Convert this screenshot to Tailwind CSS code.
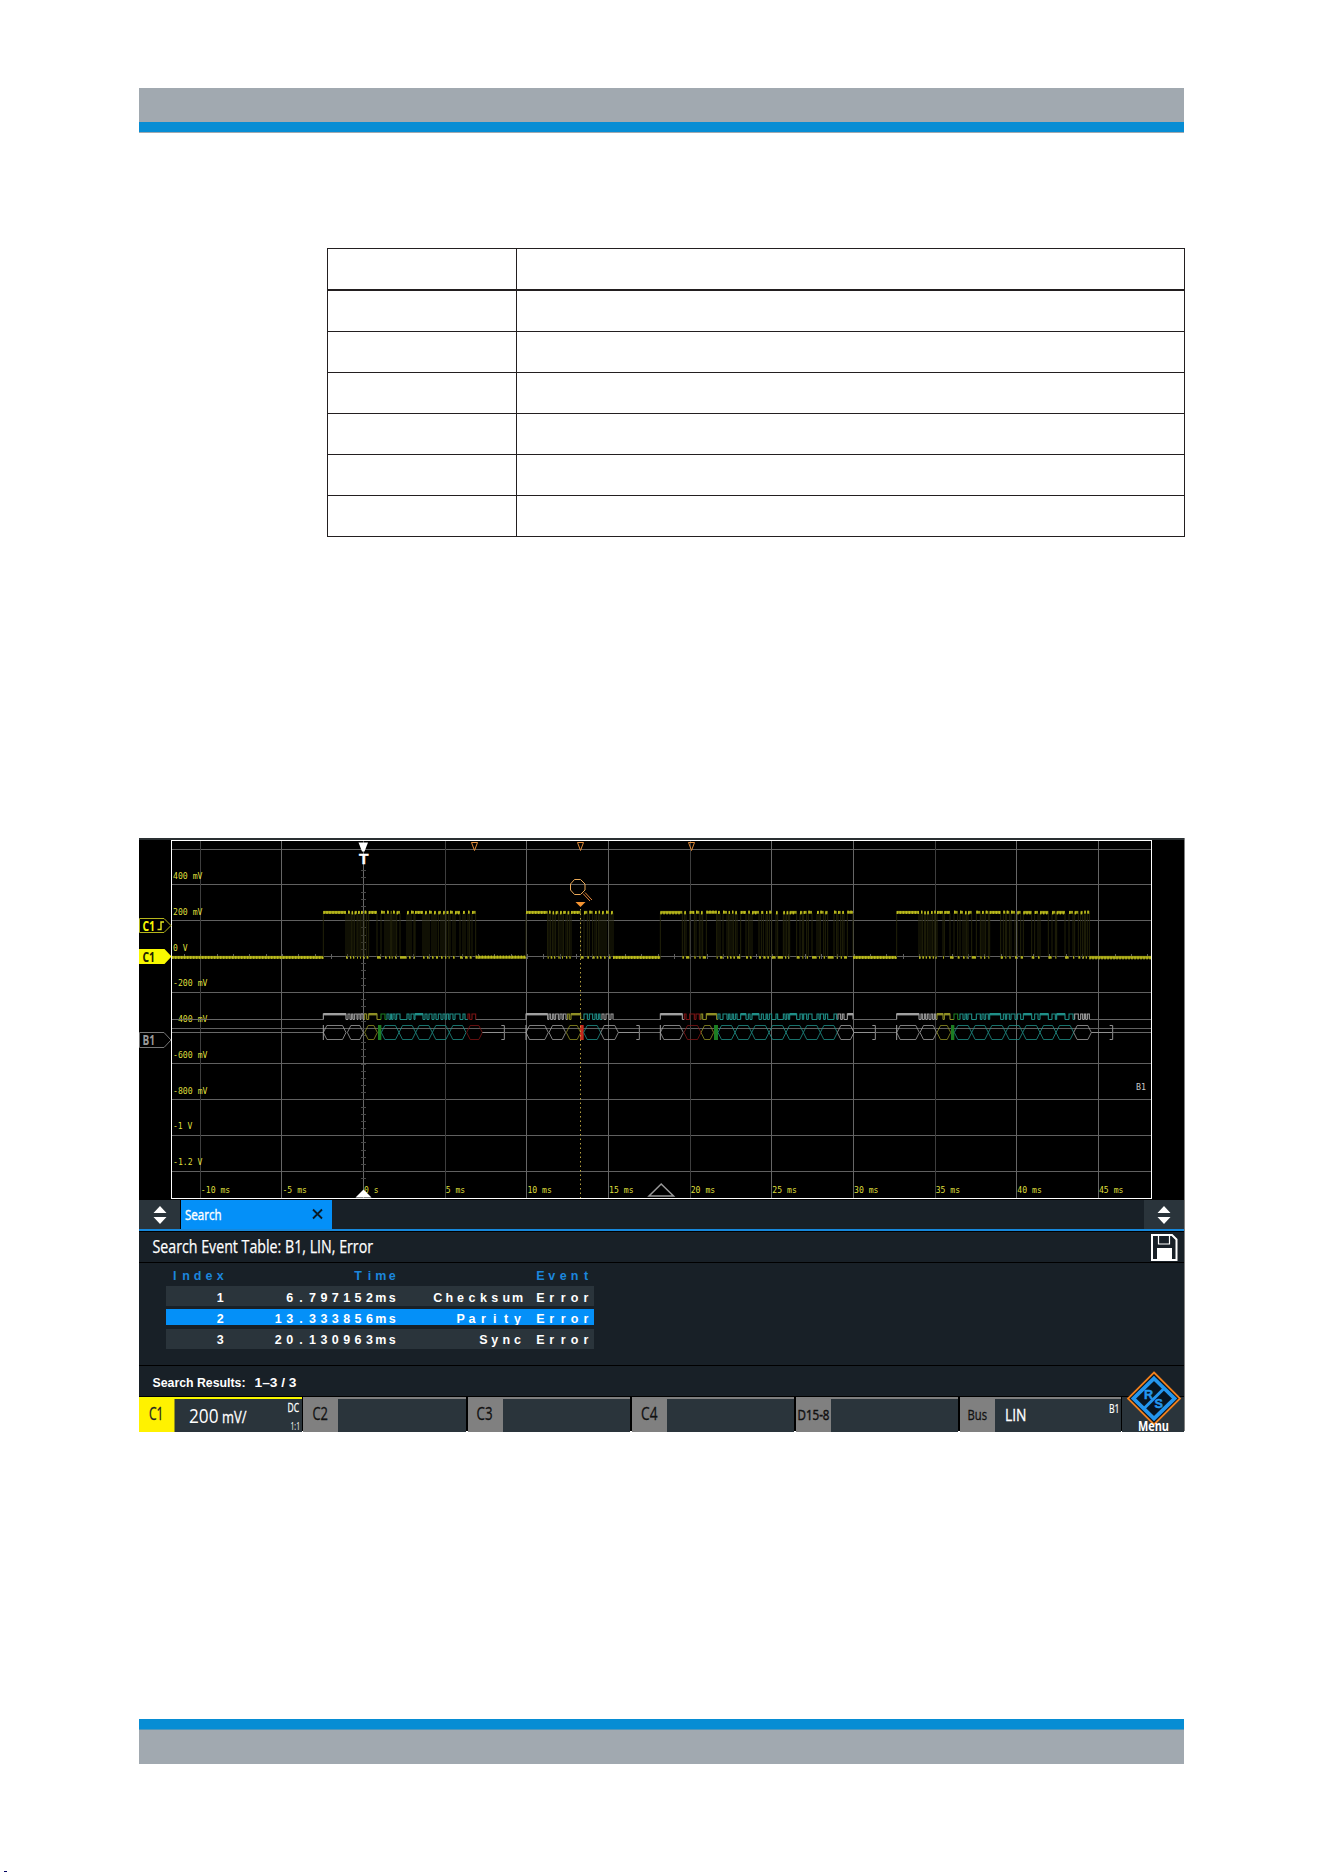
<!DOCTYPE html>
<html lang="en">

<head>
    <meta charset="UTF-8">
    <meta name="viewport" content="width=device-width, initial-scale=1.0">
    <title>LIN Search Results</title>
    <script src="https://cdn.jsdelivr.net/npm/@tailwindcss/browser@4"></script>
</head>

<body class="bg-white">
    <div class="relative w-[1324px] h-[1872px] overflow-hidden pl-[139px] pt-[88px] font-['Open_Sans',sans-serif]">
        <header class="w-[1045px] h-[45px] bg-[#a1a9b0] border-b border-[#a1a9b0] flex flex-col justify-end">
            <div class="h-[10px] bg-[#078dd4]"></div>
        </header>

        <!-- Empty description table -->
        <div class="mt-[115px] ml-[188px] w-[858px] h-[289px] border border-[#231f20] flex">
            <div class="w-[189px] border-r border-[#231f20] flex flex-col">
                <div class="h-[42px] border-b-2 border-[#231f20]"></div>
                <div class="h-[41px] border-b border-[#231f20]"></div>
                <div class="h-[41px] border-b border-[#231f20]"></div>
                <div class="h-[41px] border-b border-[#231f20]"></div>
                <div class="h-[41px] border-b border-[#231f20]"></div>
                <div class="h-[41px] border-b border-[#231f20]"></div>
            </div>
            <div class="flex-1 flex flex-col">
                <div class="h-[42px] border-b-2 border-[#231f20]"></div>
                <div class="h-[41px] border-b border-[#231f20]"></div>
                <div class="h-[41px] border-b border-[#231f20]"></div>
                <div class="h-[41px] border-b border-[#231f20]"></div>
                <div class="h-[41px] border-b border-[#231f20]"></div>
                <div class="h-[41px] border-b border-[#231f20]"></div>
            </div>
        </div>

        <!-- Oscilloscope screen -->
        <main class="mt-[301px] w-[1046px] h-[593px] bg-black border-r border-[#808080] flex flex-col">
            <svg id="plot" class="block w-[1045px] h-[361px] shrink-0" viewBox="139 838 1045 361">
                <rect x="139" y="838" width="1045" height="2" fill="#2a3033" />
                <g id="grid"></g>
                <g id="labels" font-family="'DejaVu Sans Mono', monospace" font-size="9.5" fill="#dede3c"></g>
                <g id="traces"></g>
                <rect x="171.5" y="840.5" width="980" height="358" fill="none" stroke="#fff" />
                <text x="1136" y="1090" font-family="'DejaVu Sans Mono', monospace" font-size="9" fill="#c8c8c8" textLength="10" lengthAdjust="spacingAndGlyphs">B1</text>

                <!-- trigger markers -->
                <path d="M358.5 842.500h9.500l-3.500 9h-2.500z" fill="#fff" />
                <text x="359" y="864" font-family="'Liberation Sans', sans-serif" font-size="14" font-weight="700" fill="#fff" stroke="#fff" stroke-width=".4" textLength="9.500" lengthAdjust="spacingAndGlyphs">T</text>
                <path d="M355.500 1197.500h16l-8-8z" fill="#fff" />
                <path d="M649 1196h24.500l-12.300-12z" fill="none" stroke="#999" stroke-width="1.500" />

                <!-- search hit markers -->
                <g fill="none" stroke="#e08a38">
                    <path d="M471.500 842.500h6l-3 8z" />
                    <path d="M577.500 842.500h6l-3 8z" />
                    <path d="M688.500 842.500h6l-3 8z" />
                    <path d="M574.500 879.500h6l4.500 4.500v6l-4.500 4.500h-6l-4-4.500v-6z" stroke="#e8a858" />
                    <path d="M583 893.500l7 7.500M585 892.500l7 7.500" stroke="#e8883a" />
                </g>
                <path d="M575.500 902h10l-5 5z" fill="#f59432" />
                <path d="M580.500 909V1198" stroke="#b5a040" stroke-dasharray="1.500 3" />

                <!-- channel tags -->
                <path d="M139.500 918.500h24.500l7 7-7 7h-24.500z" fill="#000" stroke="#b5b51c" />
                <path d="M139 949h25.500l7 7.500-7 7.500H139z" fill="#f8f800" />
                <path d="M139.500 1032.500h24.500l7 7.500-7 7.500h-24.500z" fill="#000" stroke="#777" />
                <g font-family="'Open Sans', sans-serif" font-size="13.500" font-weight="700">
                    <text x="142.500" y="930.500" fill="#f8f800" textLength="12.500" lengthAdjust="spacingAndGlyphs">C1</text>
                    <text x="142.500" y="961.500" fill="#222200" textLength="12.500" lengthAdjust="spacingAndGlyphs">C1</text>
                    <text x="142.500" y="1044.500" fill="#999" textLength="12.500" lengthAdjust="spacingAndGlyphs">B1</text>
                </g>
                <path d="M157.500 929.500h3.500v-7.500h3" fill="none" stroke="#e8e820" stroke-width="1.400" />
            </svg>

            <!-- Tab bar -->
            <div class="mt-px h-[31px] bg-[#182027] border-b-2 border-[#1688dc] flex shrink-0">
                <div class="w-[42px] bg-[#2a343b] border-r border-black flex items-center justify-center">
                    <svg class="w-[14px] h-[20px]" viewBox="0 0 14 20" fill="#fff">
                        <path d="M.5 8L7 1l6.500 7zM.500 12h13L7 19z" />
                    </svg>
                </div>
                <div class="w-[151px] bg-[#0490f8]">
                    <svg class="block w-[151px] h-[29px]" viewBox="181 1200 151 29">
                        <text x="185" y="1219.500" font-size="14" fill="#fff" stroke="#fff" stroke-width=".4" textLength="36.500" lengthAdjust="spacingAndGlyphs">Search</text>
                        <path d="M313 1209.500l9 9M322 1209.500l-9 9" stroke="#0a1a28" stroke-width="1.800" />
                    </svg>
                </div>
                <div class="ml-auto w-[40px] bg-[#2a343b] flex items-center justify-center">
                    <svg class="w-[14px] h-[20px]" viewBox="0 0 14 20" fill="#fff">
                        <path d="M.5 8L7 1l6.500 7zM.500 12h13L7 19z" />
                    </svg>
                </div>
            </div>

            <!-- Event table -->
            <div class="h-[32px] bg-[#182027] border-y border-black flex justify-between shrink-0 pl-[13px] pr-[6px]">
                <svg class="block w-[230px] h-[30px]" viewBox="152 1232 230 30">
                    <text x="152.500" y="1252.500" font-size="17.800" fill="#fff" stroke="#fff" stroke-width=".25" textLength="220.500" lengthAdjust="spacingAndGlyphs">Search Event Table: B1, LIN, Error</text>
                </svg>
                <svg class="block w-[28px] h-[30px]" viewBox="1150 1232 28 30">
                    <path d="M1152 1235h20l4.500 4.500v20.500H1152z" fill="none" stroke="#fff" stroke-width="2" />
                    <path d="M1158.500 1235v9h11v-9" fill="none" stroke="#fff" stroke-width="1.200" />
                    <path d="M1157 1248h15v12h-15z" fill="#fff" />
                </svg>
            </div>
            <div class="h-[102px] bg-[#182027] shrink-0 pl-[27px] flex flex-col">
                <svg class="event-row block w-[428px] h-[23px] shrink-0" viewBox="0 0 428 23"></svg>
                <svg class="event-row block w-[428px] h-[20px] shrink-0 bg-[#2a343b]" viewBox="0 0 428 20"></svg>
                <svg class="event-row block w-[428px] h-[16px] mt-[3px] shrink-0 bg-[#0490f8]" viewBox="0 0 428 16"></svg>
                <svg class="event-row block w-[428px] h-[20px] mt-[4px] shrink-0 bg-[#2a343b]" viewBox="0 0 428 20"></svg>
            </div>
            <div class="h-[32px] bg-[#182027] border-y border-black shrink-0 pl-[13px]">
                <svg class="block w-[160px] h-[30px]" viewBox="152 1366 160 30" font-family="'Liberation Sans', sans-serif" font-weight="700" font-size="12.500" fill="#fff">
                    <text x="152.500" y="1386.500" textLength="93" lengthAdjust="spacingAndGlyphs">Search Results:</text>
                    <text x="254.500" y="1386.500" textLength="42" lengthAdjust="spacingAndGlyphs">1–3 / 3</text>
                </svg>
            </div>

            <!-- Channel bar -->
            <div class="relative flex-1 flex">
                <div class="w-[163px] mr-px bg-[#2a343b] border-t-2 border-[#f8f800] flex">
                    <svg class="block w-[163px] h-[33px]" viewBox="139 1398 163 33" fill="#fff">
                        <rect x="139" y="1398" width="35.500" height="33" fill="#fff200" />
                        <text x="149" y="1418.500" font-size="17.500" fill="#222" stroke="#222" stroke-width=".3" textLength="14.500" lengthAdjust="spacingAndGlyphs">C1</text>
                        <text x="189" y="1421.500" font-size="20" textLength="29.500" lengthAdjust="spacingAndGlyphs">200</text>
                        <text x="222" y="1421.500" font-size="16" stroke="#fff" stroke-width=".3" textLength="24.500" lengthAdjust="spacingAndGlyphs">mV/</text>
                        <text x="287.500" y="1410.500" font-size="13" stroke="#fff" stroke-width=".3" textLength="11.500" lengthAdjust="spacingAndGlyphs">DC</text>
                        <text x="290.500" y="1428.500" font-size="11.500" textLength="9.500" lengthAdjust="spacingAndGlyphs">1:1</text>
                    </svg>
                </div>
                <div class="w-[163px] mr-[2px] bg-[#2a343b] border-t-2 border-[#808080]">
                    <div class="w-[35px] h-full bg-[#808080]">
                        <svg class="block w-[35px] h-[33px]" viewBox="303 1398 35 33">
                            <text x="312.500" y="1418.500" font-size="17.500" fill="#111" stroke="#111" stroke-width=".3" textLength="15.500" lengthAdjust="spacingAndGlyphs">C2</text>
                        </svg>
                    </div>
                </div>
                <div class="w-[162px] mr-[2px] bg-[#2a343b] border-t-2 border-[#808080]">
                    <div class="w-[35px] h-full bg-[#808080]">
                        <svg class="block w-[35px] h-[33px]" viewBox="468 1398 35 33">
                            <text x="476.500" y="1418.500" font-size="17.500" fill="#111" stroke="#111" stroke-width=".3" textLength="16" lengthAdjust="spacingAndGlyphs">C3</text>
                        </svg>
                    </div>
                </div>
                <div class="w-[162px] mr-[2px] bg-[#2a343b] border-t-2 border-[#808080]">
                    <div class="w-[35px] h-full bg-[#808080]">
                        <svg class="block w-[35px] h-[33px]" viewBox="632 1398 35 33">
                            <text x="641" y="1418.500" font-size="17.500" fill="#111" stroke="#111" stroke-width=".3" textLength="16.500" lengthAdjust="spacingAndGlyphs">C4</text>
                        </svg>
                    </div>
                </div>
                <div class="w-[162px] mr-[2px] bg-[#2a343b] border-t-2 border-[#808080]">
                    <div class="w-[35px] h-full bg-[#808080]">
                        <svg class="block w-[35px] h-[33px]" viewBox="796 1398 35 33">
                            <text x="797.500" y="1418.500" font-size="15" fill="#111" stroke="#111" stroke-width=".5" textLength="32" lengthAdjust="spacingAndGlyphs">D15-8</text>
                        </svg>
                    </div>
                </div>
                <div class="w-[161px] mr-px bg-[#2a343b] border-t-2 border-[#808080] flex">
                    <svg class="block w-[161px] h-[33px]" viewBox="960 1398 161 33">
                        <rect x="960" y="1398" width="35" height="33" fill="#808080" />
                        <text x="967.500" y="1418.500" font-size="15" fill="#111" stroke="#111" stroke-width=".3" textLength="19.500" lengthAdjust="spacingAndGlyphs">Bus</text>
                        <text x="1005" y="1419.500" font-size="17" fill="#fff" stroke="#fff" stroke-width=".3" textLength="21.500" lengthAdjust="spacingAndGlyphs">LIN</text>
                        <text x="1109" y="1411.500" font-size="12.500" fill="#fff" stroke="#fff" stroke-width=".2" textLength="10.500" lengthAdjust="spacingAndGlyphs">B1</text>
                    </svg>
                </div>
                <div class="flex-1 bg-[#2a343b]"></div>
                <svg class="absolute right-0 bottom-0 w-[64px] h-[64px]" viewBox="1120 1367 64 64">
                    <path d="M1154 1371.500l26 26-26 26-26-26z" fill="#071522" stroke="#f07f1c" stroke-width="1.800" />
                    <path d="M1154 1377.500l20.500 20-20.500 20-20.500-20z" fill="none" stroke="#2496ee" stroke-width="3.800" />
                    <path d="M1164 1387.500l-20 20" stroke="#2496ee" stroke-width="3" />
                    <g font-family="'Liberation Sans', sans-serif" font-size="12.500" font-weight="700" fill="#2496ee" stroke="#2496ee" stroke-width=".5">
                        <text x="1144" y="1398">R</text>
                        <text x="1154.500" y="1406.500">S</text>
                    </g>
                    <text x="1138" y="1429.500" font-size="14" font-weight="700" fill="#fff" textLength="31" lengthAdjust="spacingAndGlyphs">Menu</text>
                </svg>
            </div>
        </main>

        <footer class="mt-[288px] w-[1045px] h-[45px] bg-[#a1a9b0]">
            <div class="h-[11px] bg-[#078dd4] border-b border-[#4f97bd]"></div>
        </footer>
        <div class="absolute left-[4px] bottom-0 w-[3px] h-px bg-[#000060]"></div>
    </div>

    <script>
        const NS = 'http://www.w3.org/2000/svg';

        function add(parent, tag, attrs, text) {
            const el = document.createElementNS(NS, tag);
            for (const k in attrs) el.setAttribute(k, attrs[k]);
            if (text) el.textContent = text;
            parent.appendChild(el);
            return el;
        }

        const grid = document.getElementById('grid');
        const labels = document.getElementById('labels');
        const traces = document.getElementById('traces');

        // --- Grid ---
        [849, 884, 920, 956, 992, 1028, 1063, 1099, 1135, 1171].forEach(y =>
            add(grid, 'rect', { x: 172, y: y, width: 979, height: 1, fill: '#606060' }));
        [200, 281, 363, 445, 526, 608, 690, 771, 853, 935, 1016, 1098].forEach((x, i) =>
            add(grid, 'rect', { x: x, y: 841, width: 1, height: 357, fill: [0, 3, 6, 9].includes(i) ? '#3e3e3e' : '#666' }));
        for (let y = 870; y < 1182; y += 7.17) {
            add(grid, 'rect', { x: 361, y: Math.round(y), width: 5, height: 1, fill: '#484848' });
        }
        for (let x = 184; x < 1150; x += 16.33) {
            add(grid, 'rect', { x: Math.round(x), y: 954, width: 1, height: 5, fill: '#606060' });
        }

        // --- Axis labels, 5px per character ---
        function label(text, x, y) {
            add(labels, 'text', { x: x, y: y, textLength: text.length * 5 - 0.5, lengthAdjust: 'spacingAndGlyphs' }, text);
        }
        ['400 mV', '200 mV', '0 V', '-200 mV', '-400 mV', '-600 mV', '-800 mV', '-1 V', '-1.2 V'].forEach((t, i) =>
            label(t, 173, Math.round(879 + i * 35.75)));
        ['-10 ms', '-5 ms', '0 s', '5 ms', '10 ms', '15 ms', '20 ms', '25 ms', '30 ms', '35 ms', '40 ms', '45 ms'].forEach((t, i) =>
            label(t, 200.8 + i * 81.65, 1193));

        // --- LIN frames: positions in thirds of a pixel from x0 ---
        const W = '#a0a0a0', Y = '#8f8f25', T = '#1f8f88', R = '#7c1414', G = '#1c7d22';
        const frames = [
            {
                x0: 320, close: 553,
                hi: [10, 78, 84, 90, 95, 99, 104, 111, 114, 120, 123, 129, 134, 140, 146, 171, 183, 195, 201, 207, 212, 215, 219, 225, 230, 240, 261, 267, 273, 282, 285, 309, 315, 321, 327, 336, 342, 348, 355, 363, 369, 375, 380, 386, 390, 399, 405, 420, 429, 435, 444, 449, 456, 467],
                cells: [[10, 78, W], [82, 130, W], [134, 172, Y], [174, 184, G, 1], [184, 237, T], [237, 287, T], [287, 337, T], [337, 388, T], [388, 438, T], [440, 487, R]]
            },
            {
                x0: 400, close: 718,
                hi: [378, 443, 447, 452, 458, 462, 467, 475, 480, 486, 490, 498, 503, 508, 513, 542, 552, 562, 568, 578, 585, 590, 596, 600, 606, 612, 618, 627, 633, 639],
                cells: [[378, 445, W], [447, 497, W], [499, 542, Y], [540, 551, '#c22a1c', 1], [551, 602, T], [602, 655, W]]
            },
            {
                x0: 640, close: 706,
                hi: [61, 127, 133, 138, 149, 163, 168, 178, 183, 188, 199, 230, 234, 240, 249, 261, 266, 270, 276, 280, 286, 291, 302, 318, 325, 330, 336, 357, 364, 370, 378, 382, 388, 395, 408, 413, 430, 435, 440, 445, 449, 470, 480, 487, 491, 500, 505, 516, 531, 537, 541, 551, 556, 563, 582, 590, 594, 602, 607, 612, 622, 639],
                cells: [[61, 130, W], [132, 183, R], [183, 221, Y], [222, 234, G, 1], [234, 285, T], [285, 335, T], [335, 387, T], [387, 438, T], [438, 490, T], [490, 541, T], [541, 592, T], [592, 642, W]]
            },
            {
                x0: 880, close: 698,
                hi: [50, 117, 123, 127, 133, 137, 142, 147, 153, 158, 163, 167, 171, 189, 193, 210, 222, 233, 240, 249, 255, 260, 264, 275, 289, 301, 306, 312, 317, 325, 329, 362, 370, 376, 380, 388, 393, 405, 412, 422, 430, 455, 464, 474, 480, 505, 516, 526, 530, 555, 567, 579, 584, 595, 602, 608, 613, 617, 622, 628],
                cells: [[50, 118, W], [120, 170, W], [171, 212, Y], [213, 223, G, 1], [223, 275, T], [275, 325, T], [325, 377, T], [377, 428, T], [428, 480, T], [480, 528, T], [528, 581, T], [581, 634, W]]
            }
        ];

        function noisy(x1, x2, y) {
            add(traces, 'rect', { x: x1, y: y - 1.4, width: x2 - x1, height: 2.8, fill: '#9a9a16' });
            for (let x = x1; x < x2 - 1; x += 3) {
                add(traces, 'rect', { x: x, y: y - 1.7 + (Math.round(x * 7) % 3) * 0.5, width: 1.4, height: 2.8, fill: '#bdbd1e' });
            }
        }

        let prev = 172, prevBus = 172;
        frames.forEach(f => {
            const px = v => f.x0 + v / 3;
            const colorAt = v => {
                const c = f.cells.find(c => v < c[1]);
                return c ? c[2] : W;
            };
            const start = px(f.hi[0]);
            const end = px(f.hi[f.hi.length - 1]);
            noisy(prev, start, 957.3);
            add(traces, 'path', { d: `M${prev} 1019.5H${start}M${prevBus} 1032.5H${start}`, stroke: '#686868' });

            for (let i = 0; i < f.hi.length; i += 2) {
                const a = px(f.hi[i]), b = px(f.hi[i + 1]);
                const color = colorAt(f.hi[i]);
                add(traces, 'path', { d: `M${a} 913V957M${b} 913V957`, stroke: '#25250a', 'stroke-width': 0.9 });
                noisy(a, b, 912.3);
                add(traces, 'path', { d: `M${a} 1019.5V1014H${b}V1019.5`, fill: 'none', stroke: color, 'stroke-width': 1.1 });
                if (b - a > 5) add(traces, 'rect', { x: a, y: 1013, width: b - a, height: 2.4, fill: color });
                if (i + 2 < f.hi.length) {
                    const next = px(f.hi[i + 2]);
                    add(traces, 'rect', { x: b, y: 956.1, width: Math.max(next - b - 0.3, 1), height: 2.6, fill: '#b0b01c' });
                    add(traces, 'path', { d: `M${b} 1019.5H${next}`, stroke: color });
                }
            }

            f.cells.forEach(([a, b, color, solid]) => {
                const l = px(a), r = px(b);
                if (solid) {
                    add(traces, 'rect', { x: l, y: 1025, width: r - l, height: 15, fill: color });
                } else {
                    add(traces, 'path', {
                        d: `M${l} 1032.5L${l + 3.5} 1025.5H${r - 3.5}L${r} 1032.5L${r - 3.5} 1039.5H${l + 3.5}Z`,
                        fill: 'none', stroke: color, 'stroke-width': 0.8
                    });
                }
            });
            add(traces, 'path', { d: `M${start} 1025V1040`, stroke: W });
            const last = px(f.cells[f.cells.length - 1][1]), close = px(f.close);
            add(traces, 'path', { d: `M${last} 1032.5H${close}M${close - 3} 1025.5H${close}V1039.5H${close - 3}`, fill: 'none', stroke: '#909090' });
            prev = end;
            prevBus = close;
        });
        noisy(prev, 1151, 957.3);
        add(traces, 'path', { d: `M${prev} 1019.5H1151M${prevBus} 1032.5H1151`, stroke: '#686868' });

        // --- Event rows: fixed pitch text, right aligned on the last character ---
        const rows = [
            ['Index', 'Time', 'Event'],
            ['1', '6.797152ms', 'Checksum Error'],
            ['2', '13.333856ms', 'Parity Error'],
            ['3', '20.130963ms', 'Sync Error']
        ];
        const baselines = [17, 15.5, 13.5, 15];
        document.querySelectorAll('.event-row').forEach((row, i) => {
            rows[i].forEach((text, c) => {
                const right = [54.3, 226.3, 420][c];
                const xs = [...text].map((ch, k) => (right - (text.length - 1 - k) * 11.4).toFixed(1)).join(' ');
                add(row, 'text', {
                    x: xs, y: baselines[i], 'text-anchor': 'middle', 'font-size': 12.5, 'font-weight': 700,
                    'font-family': "'Liberation Sans', sans-serif", fill: i ? '#fff' : '#1c86dc'
                }, text);
            });
        });
    </script>
</body>

</html>
